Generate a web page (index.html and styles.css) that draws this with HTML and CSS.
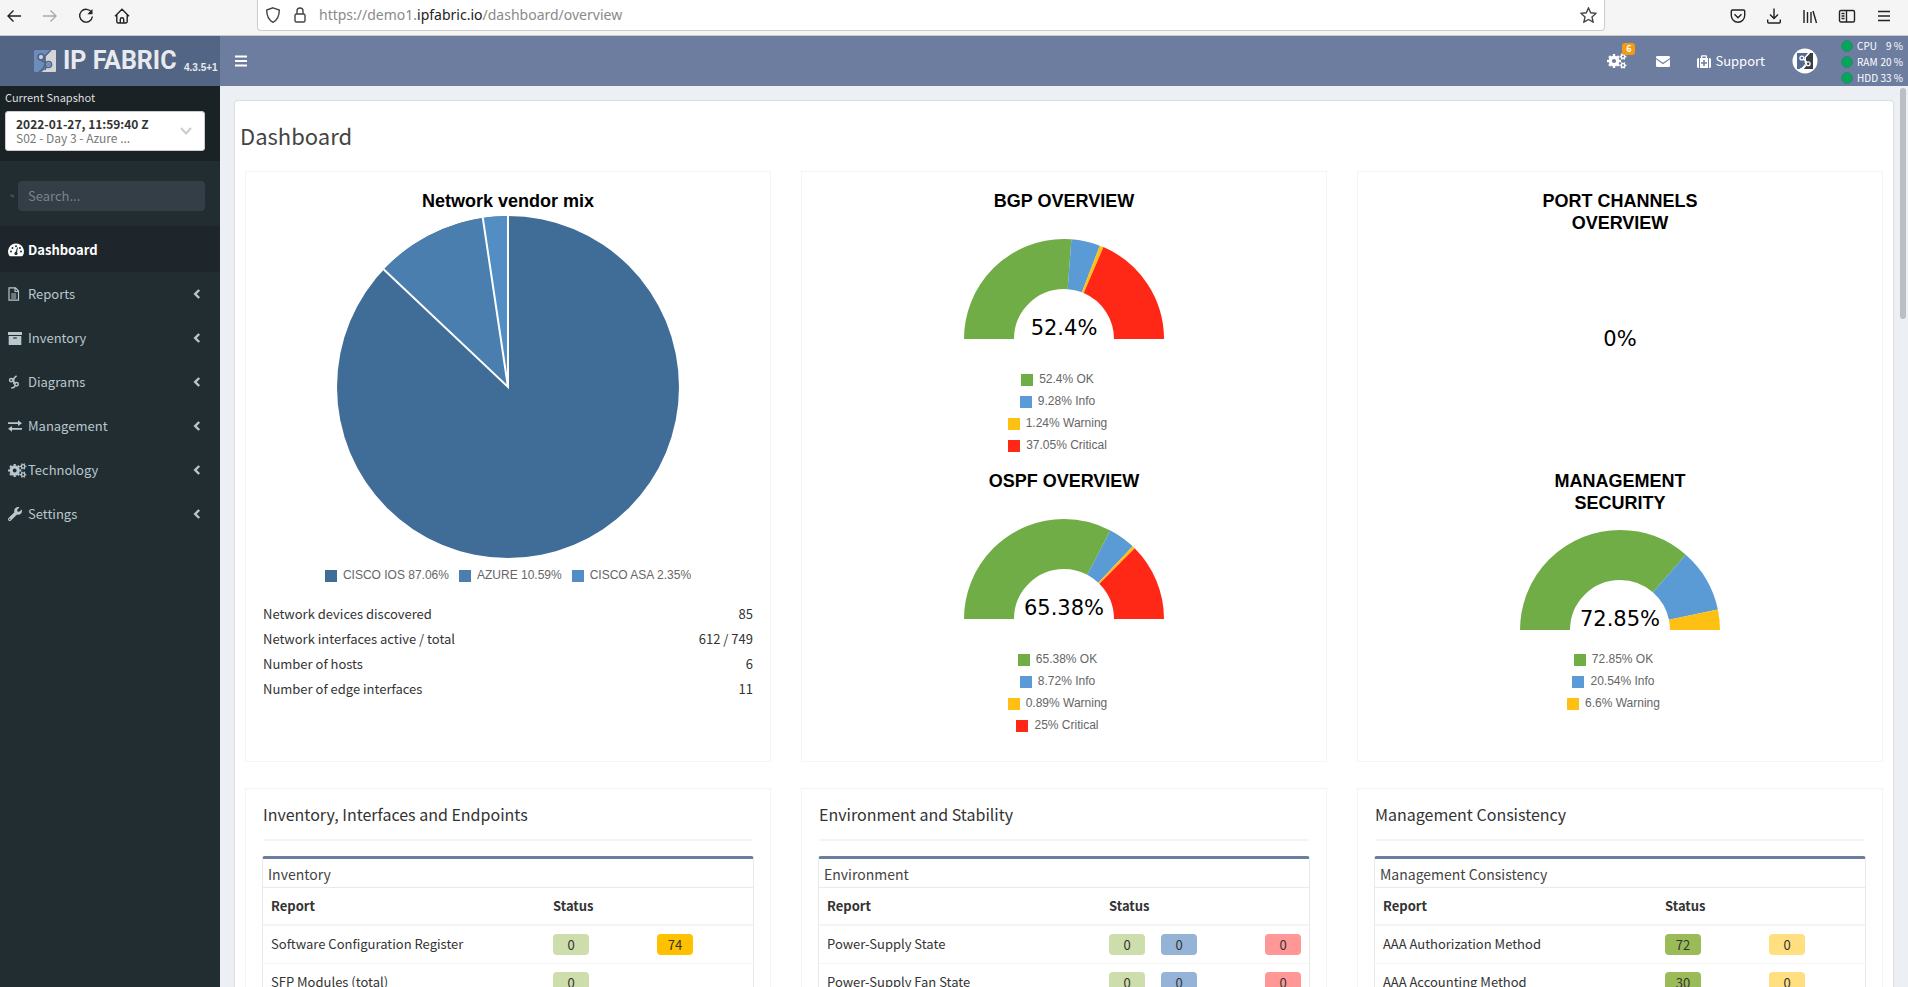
FILE: index.html
```html
<!DOCTYPE html>
<html lang="en">
<head>
<meta charset="utf-8">
<title>IP Fabric - Dashboard</title>
<link rel="stylesheet" href="styles.css">
</head>
<body>
<svg class="sprite" aria-hidden="true">
  <symbol id="chevron" viewBox="0 0 8 10"><path d="M6.2 1 2.2 5l4 4" fill="none" stroke="currentColor" stroke-width="2.4"/></symbol>
  <symbol id="gears" viewBox="0 0 20 16">
    <g fill="none" stroke="currentColor">
      <circle cx="7" cy="8" r="3.8" stroke-width="3.4"/>
      <circle cx="7" cy="8" r="6" stroke-width="2" pathLength="16" stroke-dasharray="1 1" stroke-dashoffset=".5"/>
      <circle cx="16" cy="3.6" r="1.8" stroke-width="1.4"/>
      <circle cx="16" cy="3.6" r="2.8" stroke-width="1.2" pathLength="12" stroke-dasharray="1 1" stroke-dashoffset=".5"/>
      <circle cx="16" cy="12.4" r="1.8" stroke-width="1.4"/>
      <circle cx="16" cy="12.4" r="2.8" stroke-width="1.2" pathLength="12" stroke-dasharray="1 1" stroke-dashoffset=".5"/>
    </g>
  </symbol>
  <symbol id="node-s" viewBox="0 0 14 16">
    <g fill="none" stroke="currentColor" stroke-width="1.7">
      <circle cx="3.8" cy="5.8" r="2"/>
      <circle cx="10" cy="10.6" r="2"/>
      <path d="M10 .8 6.800 3.800v6.800M5.500 6.800l3.200 2.400M8.300 11.800 7.200 14.200l-3.600 1"/>
    </g>
  </symbol>
</svg>

<div class="browser">
  <div class="browser-nav">
    <button class="tool" aria-label="Back"><svg width="16" height="16" viewBox="0 0 16 16"><path d="M15 8H2M7.5 2.5 2 8l5.500 5.500"/></svg></button>
    <button class="tool tool-off" aria-label="Forward"><svg width="16" height="16" viewBox="0 0 16 16"><path d="M1 8h13M8.500 2.500 14 8l-5.500 5.500"/></svg></button>
    <button class="tool" aria-label="Reload"><svg width="16" height="16" viewBox="0 0 16 16"><path d="M13.600 4.500A6.400 6.400 0 1 0 14.400 8.500"/><path d="M14.500 1v5.200H9.300z" fill="currentColor" stroke="none"/></svg></button>
    <button class="tool" aria-label="Home"><svg width="16" height="16" viewBox="0 0 16 16"><path d="M1 8.200 8 1.300l7 6.900M2.800 7v6.500a1.500 1.500 0 0 0 1.500 1.500h7.400a1.500 1.500 0 0 0 1.500-1.500V7M6.300 15v-3.500a1.700 1.700 0 0 1 3.400 0V15"/></svg></button>
  </div>
  <div class="address">
    <svg class="line-icon" width="16" height="16" viewBox="0 0 16 16"><path d="M8 .8 14.300 3c0 6-1.800 10-6.300 12.300C3.500 13 1.700 9 1.700 3z"/></svg>
    <svg class="line-icon" width="16" height="16" viewBox="0 0 16 16"><rect x="3" y="7" width="10" height="8" rx="1.500"/><path d="M5 7V4a3 3 0 0 1 6 0v3"/></svg>
    <div class="url" role="textbox" aria-label="Address">https://demo1.<span class="domain">ipfabric.io</span>/dashboard/overview</div>
    <button class="tool" aria-label="Bookmark"><svg width="17" height="16" viewBox="0 0 17 16"><path d="m8.500 1 2.200 4.800 5.200.6-3.900 3.500 1.100 5.200-4.600-2.600-4.600 2.600L5 9.900 1.100 6.400l5.200-.6z"/></svg></button>
  </div>
  <div class="browser-tools">
    <button class="tool" aria-label="Pocket"><svg width="16" height="16" viewBox="0 0 16 16"><path d="M2.500 2h11A1.200 1.200 0 0 1 14.700 3.200V7.500a6.700 6.700 0 0 1-13.400 0V3.200A1.200 1.200 0 0 1 2.500 2zM4.500 6.300 8 9.700l3.500-3.400"/></svg></button>
    <button class="tool" aria-label="Downloads"><svg width="16" height="16" viewBox="0 0 16 16"><path d="M8 .5v10M4 6.500l4 4 4-4M1.700 11.500V14a1 1 0 0 0 1 1h10.600a1 1 0 0 0 1-1v-2.500"/></svg></button>
    <button class="tool" aria-label="Library"><svg width="16" height="16" viewBox="0 0 16 16"><path d="M2 2v13M5.500 4v11M9 4v11M11 3l3.500 12"/></svg></button>
    <button class="tool" aria-label="Sidebars"><svg width="18" height="16" viewBox="0 0 18 16"><rect x="1.500" y="2.500" width="15" height="11.500" rx="1.500"/><path d="M8.500 2.500V14M3.500 5.500h3M3.500 8h3M3.500 10.500h3"/></svg></button>
    <button class="tool" aria-label="Menu"><svg width="16" height="16" viewBox="0 0 16 16"><path d="M2 3.500h12M2 8h12M2 12.500h12"/></svg></button>
  </div>
</div>

<div class="app">
  <aside class="sidebar">
    <a class="brand" href="#">
      <svg width="22" height="22" viewBox="0 0 22 22">
        <rect width="22" height="22" rx="1" fill="#6c8cbc"/>
        <path d="M16 0h5a1 1 0 0 1 1 1v20a1 1 0 0 1-1 1H8l4-4-1-12z" fill="#d3d5d8"/>
        <g fill="none" stroke="#526484" stroke-width="1.600"><circle cx="7" cy="7" r="3"/><circle cx="14.500" cy="14.500" r="3"/><path d="M17 0l-6 6v8l-2 5-4 3M7 10l5 3M12 17l-1 3"/></g>
        <circle cx="7" cy="7" r="2" fill="#d3d5d8"/><circle cx="14.500" cy="14.500" r="2" fill="#6c8cbc"/>
      </svg>
      <span class="brand-name">IP FABRIC</span>
      <span class="version">4.3.5+1</span>
    </a>
    <div class="snapshot">
      <div class="snapshot-label" id="snap">Current Snapshot</div>
      <button class="snapshot-pick" aria-labelledby="snap">
        <span class="snapshot-text"><b>2022-01-27, 11:59:40 Z</b><span class="snapshot-note">S02 - Day 3 - Azure ...</span></span>
        <svg width="12" height="8" viewBox="0 0 12 8"><path d="m1 1 5 5.500L11 1" fill="none" stroke="#ccc" stroke-width="2"/></svg>
      </button>
    </div>
    <div class="search">
      <svg width="4" height="4" viewBox="0 0 4 4"><path d="M1 2.500a1 1 0 1 1 2-1v2" fill="none" stroke="#7d888c" stroke-width=".7"/></svg>
      <input class="search-input" type="text" placeholder="Search..." aria-label="Search">
    </div>
    <nav class="menu">
      <a class="item item-on" href="#"><span class="item-icon"><svg width="16" height="14" viewBox="0 0 16 14"><path d="M8 .5a8 8 0 0 0-7 11.800q.5 1 1.300 1h11.400q.8 0 1.300-1A8 8 0 0 0 8 .5z" fill="currentColor"/><g fill="#1e282c"><circle cx="3" cy="8.500" r="1"/><circle cx="4.500" cy="5" r="1"/><circle cx="8" cy="3.300" r="1"/><circle cx="13" cy="8.500" r="1"/><circle cx="12" cy="5" r="1"/><circle cx="8" cy="10.500" r="1.600"/><path d="M9.600 4.500 8.600 10l-1-.3z" stroke="#1e282c" stroke-width=".5"/></g></svg></span>Dashboard</a>
      <a class="item" href="#"><span class="item-icon"><svg width="12" height="14" viewBox="0 0 12 14"><path d="M1 .8h6.500L10.500 4v9.200H1zM7 .8v3.700h3.500M3.200 7h5M3.200 9h5M3.200 11h5" fill="none" stroke="currentColor" stroke-width="1.200"/></svg></span>Reports<svg class="item-arrow" width="8" height="10"><use href="#chevron"/></svg></a>
      <a class="item" href="#"><span class="item-icon"><svg width="14" height="13" viewBox="0 0 14 13"><path d="M0 0h14v3H0zM.7 4h12.600v9H.7z" fill="currentColor"/><path d="M5.200 6h3.600" stroke="#222d32" stroke-width="1.200"/></svg></span>Inventory<svg class="item-arrow" width="8" height="10"><use href="#chevron"/></svg></a>
      <a class="item" href="#"><span class="item-icon"><svg width="12" height="14"><use href="#node-s"/></svg></span>Diagrams<svg class="item-arrow" width="8" height="10"><use href="#chevron"/></svg></a>
      <a class="item" href="#"><span class="item-icon"><svg width="14" height="12" viewBox="0 0 14 12"><path d="M0 2.300h10V.3L14 3.200 10 6V4H0zM14 8H4V6L0 8.800l4 2.900v-2h10z" fill="currentColor"/></svg></span>Management<svg class="item-arrow" width="8" height="10"><use href="#chevron"/></svg></a>
      <a class="item" href="#"><span class="item-icon"><svg width="19" height="15"><use href="#gears"/></svg></span>Technology<svg class="item-arrow" width="8" height="10"><use href="#chevron"/></svg></a>
      <a class="item" href="#"><span class="item-icon"><svg width="14" height="14" viewBox="0 0 512 512"><path fill="currentColor" d="M507.730 109.100c-2.240-9.030-13.540-12.090-20.120-5.510l-74.360 74.360-67.880-11.310-11.310-67.880 74.360-74.360c6.620-6.620 3.430-17.900-5.660-20.160-47.380-11.740-99.550.91-136.580 37.930-39.640 39.640-50.550 97.100-34.050 147.200L18.740 402.760c-24.990 24.990-24.990 65.510 0 90.500 24.990 24.990 65.510 24.990 90.500 0l213.210-213.210c50.120 16.710 107.470 5.680 147.370-34.220 37.070-37.070 49.700-89.320 37.910-136.730zM64 472c-13.250 0-24-10.750-24-24 0-13.260 10.750-24 24-24s24 10.740 24 24c0 13.250-10.750 24-24 24z"/></svg></span>Settings<svg class="item-arrow" width="8" height="10"><use href="#chevron"/></svg></a>
    </nav>
  </aside>

  <div class="page">
    <header class="topbar">
      <button class="top-link" aria-label="Toggle navigation"><svg width="12" height="12" viewBox="0 0 12 12"><path d="M0 1.500h12M0 6h12M0 10.500h12" stroke="currentColor" stroke-width="2"/></svg></button>
      <div class="top-right">
        <button class="top-link jobs" aria-label="Jobs"><svg width="20" height="16"><use href="#gears"/></svg><span class="badge">6</span></button>
        <button class="top-link" aria-label="Messages"><svg width="14" height="11" viewBox="0 0 14 11"><path d="M1.300 0h11.400A1.300 1.300 0 0 1 14 1.300v.6L7 6.800 0 1.900v-.6A1.300 1.300 0 0 1 1.300 0zM0 3.300v6.400A1.300 1.300 0 0 0 1.300 11h11.400A1.300 1.300 0 0 0 14 9.700V3.300L7 8.200z" fill="currentColor"/></svg></button>
        <a class="top-link" href="#"><svg width="14" height="13" viewBox="0 0 14 13"><path d="M1.500 3H2v10h-.5A1.500 1.500 0 0 1 0 11.500v-7A1.500 1.500 0 0 1 1.500 3zM12 3h.5A1.500 1.500 0 0 1 14 4.500v7a1.500 1.500 0 0 1-1.500 1.500H12zM3 13V3h1V1.200Q4 .2 5 .2h4q1 0 1 1V3h1v10zM5.300 3h3.400V1.500H5.300zM6.200 5v2.200H4v1.600h2.200V11h1.600V8.800H10V7.200H7.800V5z" fill="currentColor" fill-rule="evenodd"/></svg>Support</a>
        <button class="top-link" aria-label="Account"><svg width="26" height="26" viewBox="0 0 26 26"><circle cx="13" cy="13" r="12.500" fill="#fff"/><path d="M5 5h11l-3 4v7l-4 5H5z" fill="#536a92"/><path d="M17.500 5H21v16h-9l2-5V9z" fill="#3a3d44"/><g fill="none" stroke="#fff" stroke-width="1.300"><path d="M17.500 5 13.200 9.200v5.600M11.500 11.200l3.200 2.600M14 17.500l-2 2-4 1.700"/><circle cx="9.800" cy="10" r="1.900"/><circle cx="16.200" cy="15.800" r="1.900"/></g></svg></button>
        <dl class="load">
          <div class="load-row"><dt>CPU</dt><dd>9 %</dd></div>
          <div class="load-row"><dt>RAM</dt><dd>20 %</dd></div>
          <div class="load-row"><dt>HDD</dt><dd>33 %</dd></div>
        </dl>
      </div>
    </header>

    <main class="content">
      <div class="scroll-thumb"></div>
      <div class="box">
        <h1 class="title">Dashboard</h1>
        <div class="cards">
          <section class="card">
            <h2 class="chart-title">Network vendor mix</h2>
            <svg class="pie" viewBox="0 0 342 342">
              <circle cx="171" cy="171" r="171" fill="#406d97"/>
              <path d="M171 171 46.800 53.500A171 171 0 0 1 145.800 1.900z" fill="#4a7eaf"/>
              <path d="M171 171 145.800 1.900A171 171 0 0 1 171 0z" fill="#528ec3"/>
              <path d="M171 0v171L46.800 53.500M171 171 145.800 1.900" fill="none" stroke="#fff" stroke-width="2"/>
            </svg>
            <ul class="legend legend-row">
              <li class="key key-ios">CISCO IOS 87.06%</li>
              <li class="key key-azure">AZURE 10.59%</li>
              <li class="key key-asa">CISCO ASA 2.35%</li>
            </ul>
            <dl class="stats">
              <div class="stat"><dt>Network devices discovered</dt><dd>85</dd></div>
              <div class="stat"><dt>Network interfaces active / total</dt><dd>612 / 749</dd></div>
              <div class="stat"><dt>Number of hosts</dt><dd>6</dd></div>
              <div class="stat"><dt>Number of edge interfaces</dt><dd>11</dd></div>
            </dl>
          </section>

          <section class="card">
            <div class="chart">
              <h2 class="chart-title">BGP OVERVIEW</h2>
              <div class="plot"><svg class="gauge" viewBox="0 0 200 100">
                <path class="arc ok" pathLength="100" stroke-dasharray="52.400 200" d="M25 100a75 75 0 0 1 150 0"/>
                <path class="arc info" pathLength="100" stroke-dasharray="9.280 200" stroke-dashoffset="-52.400" d="M25 100a75 75 0 0 1 150 0"/>
                <path class="arc warn" pathLength="100" stroke-dasharray="1.240 200" stroke-dashoffset="-61.680" d="M25 100a75 75 0 0 1 150 0"/>
                <path class="arc crit" pathLength="100" stroke-dasharray="38 200" stroke-dashoffset="-62.920" d="M25 100a75 75 0 0 1 150 0"/>
                <text class="value" x="100" y="96">52.4%</text>
              </svg></div>
              <ul class="legend">
                <li class="key key-ok">52.4% OK</li><li class="key key-info">9.28% Info</li><li class="key key-warn">1.24% Warning</li><li class="key key-crit">37.05% Critical</li>
              </ul>
            </div>
            <div class="chart">
              <h2 class="chart-title">OSPF OVERVIEW</h2>
              <div class="plot"><svg class="gauge" viewBox="0 0 200 100">
                <path class="arc ok" pathLength="100" stroke-dasharray="65.380 200" d="M25 100a75 75 0 0 1 150 0"/>
                <path class="arc info" pathLength="100" stroke-dasharray="8.720 200" stroke-dashoffset="-65.380" d="M25 100a75 75 0 0 1 150 0"/>
                <path class="arc warn" pathLength="100" stroke-dasharray="0.890 200" stroke-dashoffset="-74.100" d="M25 100a75 75 0 0 1 150 0"/>
                <path class="arc crit" pathLength="100" stroke-dasharray="26 200" stroke-dashoffset="-74.990" d="M25 100a75 75 0 0 1 150 0"/>
                <text class="value" x="100" y="96">65.38%</text>
              </svg></div>
              <ul class="legend">
                <li class="key key-ok">65.38% OK</li><li class="key key-info">8.72% Info</li><li class="key key-warn">0.89% Warning</li><li class="key key-crit">25% Critical</li>
              </ul>
            </div>
          </section>

          <section class="card">
            <div class="chart">
              <h2 class="chart-title">PORT CHANNELS OVERVIEW</h2>
              <div class="plot plot-empty"><span class="value">0%</span></div>
            </div>
            <div class="chart">
              <h2 class="chart-title">MANAGEMENT SECURITY</h2>
              <div class="plot"><svg class="gauge" viewBox="0 0 200 100">
                <path class="arc ok" pathLength="100" stroke-dasharray="72.850 200" d="M25 100a75 75 0 0 1 150 0"/>
                <path class="arc info" pathLength="100" stroke-dasharray="20.540 200" stroke-dashoffset="-72.850" d="M25 100a75 75 0 0 1 150 0"/>
                <path class="arc warn" pathLength="100" stroke-dasharray="7 200" stroke-dashoffset="-93.390" d="M25 100a75 75 0 0 1 150 0"/>
                <text class="value" x="100" y="96">72.85%</text>
              </svg></div>
              <ul class="legend">
                <li class="key key-ok">72.85% OK</li><li class="key key-info">20.54% Info</li><li class="key key-warn">6.6% Warning</li>
              </ul>
            </div>
          </section>

          <section class="card">
            <h2 class="group">Inventory, Interfaces and Endpoints</h2>
            <div class="panel">
              <h3 class="panel-title">Inventory</h3>
              <table class="report">
                <tr><th class="name">Report</th><th colspan="4">Status</th></tr>
                <tr><td class="name">Software Configuration Register</td><td><span class="pill pill-ok0">0</span></td><td></td><td><span class="pill pill-warn">74</span></td><td></td></tr>
                <tr><td class="name">SFP Modules (total)</td><td><span class="pill pill-ok0">0</span></td><td></td><td></td><td></td></tr>
              </table>
            </div>
          </section>
          <section class="card">
            <h2 class="group">Environment and Stability</h2>
            <div class="panel">
              <h3 class="panel-title">Environment</h3>
              <table class="report">
                <tr><th class="name">Report</th><th colspan="4">Status</th></tr>
                <tr><td class="name">Power-Supply State</td><td><span class="pill pill-ok0">0</span></td><td><span class="pill pill-info0">0</span></td><td></td><td><span class="pill pill-crit0">0</span></td></tr>
                <tr><td class="name">Power-Supply Fan State</td><td><span class="pill pill-ok0">0</span></td><td><span class="pill pill-info0">0</span></td><td></td><td><span class="pill pill-crit0">0</span></td></tr>
              </table>
            </div>
          </section>
          <section class="card">
            <h2 class="group">Management Consistency</h2>
            <div class="panel">
              <h3 class="panel-title">Management Consistency</h3>
              <table class="report">
                <tr><th class="name">Report</th><th colspan="4">Status</th></tr>
                <tr><td class="name">AAA Authorization Method</td><td><span class="pill pill-ok">72</span></td><td></td><td><span class="pill pill-warn0">0</span></td><td></td></tr>
                <tr><td class="name">AAA Accounting Method</td><td><span class="pill pill-ok">30</span></td><td></td><td><span class="pill pill-warn0">0</span></td><td></td></tr>
              </table>
            </div>
          </section>
        </div>
      </div>
    </main>
  </div>
</div>
</body>
</html>
```
FILE: styles.css
```css
* { box-sizing: border-box; }

body {
  margin: 0;
  height: 100vh;
  overflow: hidden;
  display: flex;
  flex-direction: column;
  background: #ecf0f5;
  color: #333;
  font-family: "Noto Sans CJK SC", "Open Sans", sans-serif;
  font-size: 13px;
  line-height: 20px;
}

button { border: 0; padding: 0; background: none; color: inherit; font: inherit; }
a { color: inherit; text-decoration: none; }
h1, h2, h3, ul, dl, dd { margin: 0; padding: 0; font-weight: 400; }
ul { list-style: none; }
svg { display: block; flex: none; }
.sprite { position: absolute; width: 0; height: 0; }

/* Browser toolbar */
.browser {
  display: flex;
  align-items: flex-start;
  height: 36px;
  background: #f5f5f5;
  border-bottom: 1px solid #ccc;
  color: #222;
}
.browser-nav { display: flex; gap: 20px; width: 257px; padding: 8px 6px; }
.tool svg, .line-icon { fill: none; stroke: currentColor; stroke-width: 1.4; }
.tool-off { color: #aaa; }
.address {
  flex: 1;
  display: flex;
  align-items: center;
  gap: 11px;
  height: 31px;
  padding: 0 7px;
  background: #fff;
  border: 1px solid #ccc;
  border-top: 0;
  border-radius: 0 0 4px 4px;
  color: #444;
}
.url { flex: 1; color: #8a8a8a; font-family: "Noto Sans", sans-serif; font-size: 14px; }
.domain { color: #222; }
.browser-tools { display: flex; gap: 20px; width: 303px; padding: 8px 16px; justify-content: flex-end; }

.app { flex: 1; display: flex; min-height: 0; }

/* Sidebar */
.sidebar { width: 220px; flex: none; background: #222d32; color: #b8c7ce; }
.brand {
  display: flex;
  align-items: center;
  height: 50px;
  padding-left: 34px;
  background: #536585;
  color: #e8eaed;
}
.brand-name {
  width: 124px;
  padding-left: 7px;
  font: 700 25px/30px Roboto, sans-serif;
  white-space: nowrap;
}
.version { align-self: flex-end; padding: 0 0 8px 4px; font: 700 10px/20px "Liberation Sans", Arial, sans-serif; }
.snapshot { height: 75px; padding: 2px 15px 0 5px; background: #1a2226; color: #ddd; }
.snapshot-label { font-size: 11px; line-height: 18px; }
.snapshot-pick {
  display: flex;
  align-items: center;
  justify-content: space-between;
  width: 100%;
  height: 40px;
  margin-top: 5px;
  padding: 0 12px 0 10px;
  background: #fff;
  border: 1px solid #ccc;
  border-radius: 3px;
  color: #333;
  font-size: 12px;
  line-height: 14px;
  text-align: left;
}
.snapshot-note { display: block; color: #777; }
.search { display: flex; align-items: center; gap: 4px; padding: 20px 15px 15px 10px; }
.search-input {
  flex: 1;
  min-width: 0;
  height: 30px;
  padding: 0 10px 1px;
  background: #333e46;
  border: 0;
  border-radius: 4px;
  color: #b8c7ce;
  font: inherit;
}
.search-input::placeholder { color: #7a858a; }
.item { display: flex; align-items: center; height: 44px; padding-right: 19px; padding-left: 8px; }
.item-on { height: 46px; padding-top: 2px; background: #1e262c; color: #fff; font-weight: 700; }
.item-icon { width: 20px; }
.item-arrow { margin-left: auto; }

/* Top bar */
.page { flex: 1; min-width: 0; display: flex; flex-direction: column; }
.topbar {
  display: flex;
  justify-content: space-between;
  flex: none;
  height: 50px;
  padding-left: 15px;
  background: #6c7d9f;
  color: #fff;
}
.top-right { display: flex; align-items: center; gap: 27px; padding-right: 5px; }
.top-link { position: relative; display: flex; align-items: center; gap: 4px; }
.top-link.jobs { margin-right: 2px; }
.badge {
  position: absolute;
  left: 15px;
  top: -10px;
  width: 13px;
  background: #f39c12;
  border-radius: 3px;
  font-size: 9px;
  font-weight: 700;
  line-height: 12px;
  text-align: center;
}
.load { width: 62px; margin-left: -4px; padding-top: 2px; font-size: 10px; line-height: 16px; white-space: nowrap; }
.load-row { display: flex; justify-content: space-between; }
.load-row dt { display: flex; align-items: center; gap: 4px; }
.load-row dt::before {
  content: "";
  width: 10px;
  height: 10px;
  border-radius: 50%;
  background: #00a65a;
  border: 1px solid #3f7f74;
}

/* Content */
.content { position: relative; flex: 1; min-height: 0; overflow: hidden; padding: 15px; }
.scroll-thumb {
  position: absolute;
  right: 2px;
  top: 2px;
  width: 6px;
  height: 231px;
  border-radius: 3px;
  background: #bbbfc4;
}
.box { background: #fff; border-radius: 3px; box-shadow: 0 0 1px 1px rgba(0, 0, 0, .08); padding: 0 10px 20px; }
.title { margin-left: -5px; padding-bottom: 2px; font-size: 22px; line-height: 68px; color: #444; }
.cards { display: grid; grid-template-columns: repeat(3, minmax(0, 1fr)); gap: 26px 30px; }
.card { min-width: 0; padding: 0 17px 11px; border: 1px solid #f4f4f4; }

.chart-title {
  max-width: 200px;
  margin: 0 auto;
  color: #000;
  font: 700 18px/22px "Liberation Sans", Arial, sans-serif;
  text-align: center;
}
.card > .chart-title { margin-top: 18px; }
.pie { width: 342px; height: 342px; margin: 4px auto 6px; }
.chart { display: flex; flex-direction: column; height: 280px; }
.chart:first-child { margin-top: 18px; }
.plot { flex: 1; display: flex; align-items: center; justify-content: center; padding-bottom: 2px; }
.plot-empty { padding-bottom: 26px; }
.gauge { width: 200px; height: 100px; }
.arc { fill: none; stroke-width: 50; }
.ok { stroke: #70ad47; }
.info { stroke: #5b9bd5; }
.warn { stroke: #ffc014; }
.crit { stroke: #ff2817; }
.value { fill: #000; color: #000; font-family: "DejaVu Sans", sans-serif; font-size: 21px; text-anchor: middle; }

.legend {
  height: 102px;
  color: #666;
  font: 12px/22px "Liberation Sans", Arial, sans-serif;
}
.key { display: flex; align-items: center; justify-content: center; gap: 6px; padding-right: 13px; }
.key::before { content: ""; width: 12px; height: 12px; margin-top: 2px; background: var(--key); }
.legend-row { display: flex; justify-content: center; gap: 10px; height: 37px; }
.legend-row .key { padding: 0; height: 22px; }
.key-ios { --key: #406d97; }
.key-azure { --key: #4a7eaf; }
.key-asa { --key: #528ec3; }
.key-ok { --key: #70ad47; }
.key-info { --key: #5b9bd5; }
.key-warn { --key: #ffc014; }
.key-crit { --key: #ff2817; }

.stat { display: flex; justify-content: space-between; line-height: 25px; }

.group { padding: 13px 0 13px; border-bottom: 2px solid #f4f4f4; font-size: 16px; line-height: 24px; }
.panel {
  margin: 15px -1px 0;
  border: 1px solid #eaeaea;
  border-top: 3px solid #6c7d9f;
  border-radius: 3px;
}
.panel-title { padding: 3px 5px 1px; border-bottom: 1px solid #eaeaea; color: #444; font-size: 14px; line-height: 24px; }
.report { width: 100%; border-collapse: separate; border-spacing: 0; }
.report th { height: 38px; padding: 0 8px; border-bottom: 2px solid #f4f4f4; text-align: left; font-weight: 700; }
.report td { width: 52px; min-width: 52px; height: 38px; padding: 7px 8px 8px; border-bottom: 1px solid #f4f4f4; }
.report .name { width: auto; }
.pill { display: block; min-width: 36px; padding: 0 10px; border-radius: 4px; line-height: 21px; text-align: center; }
.pill-ok0 { background: #cdddac; }
.pill-ok { background: #9bbb59; }
.pill-info0 { background: #95b3d7; }
.pill-warn { background: #ffc000; }
.pill-warn0 { background: #ffdf80; }
.pill-crit0 { background: #ff9797; }
```
